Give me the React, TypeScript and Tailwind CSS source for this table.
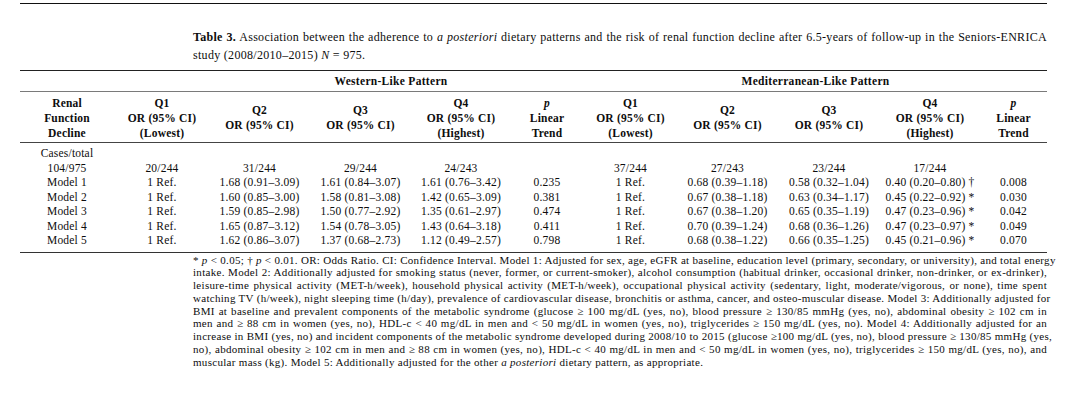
import React from "react";

const COLS =
  "grid grid-cols-[94px_96px_99px_103px_98px_74px_93px_101px_102px_100px_67px]";

const counts = ["104/975", "20/244", "31/244", "29/244", "24/243", "", "37/244", "27/243", "23/244", "17/244", ""];

const rows: string[][] = [
  ["Model 1", "1 Ref.", "1.68 (0.91–3.09)", "1.61 (0.84–3.07)", "1.61 (0.76–3.42)", "0.235", "1 Ref.", "0.68 (0.39–1.18)", "0.58 (0.32–1.04)", "0.40 (0.20–0.80) †", "0.008"],
  ["Model 2", "1 Ref.", "1.60 (0.85–3.00)", "1.58 (0.81–3.08)", "1.42 (0.65–3.09)", "0.381", "1 Ref.", "0.67 (0.38–1.18)", "0.63 (0.34–1.17)", "0.45 (0.22–0.92) *", "0.030"],
  ["Model 3", "1 Ref.", "1.59 (0.85–2.98)", "1.50 (0.77–2.92)", "1.35 (0.61–2.97)", "0.474", "1 Ref.", "0.67 (0.38–1.20)", "0.65 (0.35–1.19)", "0.47 (0.23–0.96) *", "0.042"],
  ["Model 4", "1 Ref.", "1.65 (0.87–3.12)", "1.54 (0.78–3.05)", "1.43 (0.64–3.18)", "0.411", "1 Ref.", "0.70 (0.39–1.24)", "0.68 (0.36–1.26)", "0.47 (0.23–0.97) *", "0.049"],
  ["Model 5", "1 Ref.", "1.62 (0.86–3.07)", "1.37 (0.68–2.73)", "1.12 (0.49–2.57)", "0.798", "1 Ref.", "0.68 (0.38–1.22)", "0.66 (0.35–1.25)", "0.45 (0.21–0.96) *", "0.070"],
];

const headers: React.ReactNode[][] = [
  [<>Renal</>, <>Function</>, <>Decline</>],
  [<>Q1</>, <>OR (95% CI)</>, <>(Lowest)</>],
  [<>Q2</>, <>OR (95% CI)</>],
  [<>Q3</>, <>OR (95% CI)</>],
  [<>Q4</>, <>OR (95% CI)</>, <>(Highest)</>],
  [<i>p</i>, <>Linear</>, <>Trend</>],
  [<>Q1</>, <>OR (95% CI)</>, <>(Lowest)</>],
  [<>Q2</>, <>OR (95% CI)</>],
  [<>Q3</>, <>OR (95% CI)</>],
  [<>Q4</>, <>OR (95% CI)</>, <>(Highest)</>],
  [<i>p</i>, <>Linear</>, <>Trend</>],
];

const J = "text-justify [text-align-last:justify] whitespace-nowrap";

export default function App() {
  return (
    <div className="w-[1078px] h-[404px] bg-white overflow-hidden font-['Liberation_Serif',serif] text-[#0d0d0d]">
      <div className="ml-[20px] w-[1027px] pt-[3px]">
        <div className="border-t border-[#111]" />
        {/* caption */}
        <div className="ml-[173px] w-[854px] pt-[24px] pb-[6px] text-[12px] leading-[18px] tracking-[0.3px]">
          <div className={J}>
            <b>Table 3.</b> Association between the adherence to <i>a posteriori</i> dietary patterns and the risk of renal function decline after 6.5-years of follow-up in the Seniors-ENRICA
          </div>
          <div>
            study (2008/2010–2015) <i>N</i> = 975.
          </div>
        </div>
        <div className="border-t border-[#222]" />
        {/* group header */}
        <div className={`${COLS} h-[20px] text-[11.5px] font-bold leading-[20px] tracking-[0.3px]`}>
          <div />
          <div className="col-span-5 pl-[84px] text-center">Western-Like Pattern</div>
          <div className="col-span-5 text-center">Mediterranean-Like Pattern</div>
        </div>
        <div className="border-t-[1.5px] border-[#7a7a7a]" />
        {/* column headers */}
        <div className={`${COLS} h-[50px] pt-[2px] text-[11.5px] font-bold leading-[15px] tracking-[0.2px]`}>
          {headers.map((h, i) => (
            <div key={i} className="flex flex-col items-center justify-center text-center whitespace-nowrap">
              {h.map((l, j) => (
                <div key={j}>{l}</div>
              ))}
            </div>
          ))}
        </div>
        <div className="border-t border-[#444]" />
        {/* body */}
        <div className="pt-[3px] pb-[4px] text-[11.5px] leading-[14.5px] tracking-[0.2px]">
          <div className={COLS}>
            <div className="text-center">Cases/total</div>
          </div>
          <div className={COLS}>
            {counts.map((c, i) => (
              <div key={i} className="text-center">
                {c}
              </div>
            ))}
          </div>
          {rows.map((r, ri) => (
            <div key={ri} className={COLS}>
              {r.map((c, i) => (
                <div key={i} className="text-center whitespace-nowrap">
                  {c}
                </div>
              ))}
            </div>
          ))}
        </div>
        <div className="border-t border-[#333]" />
        {/* footnote */}
        <div className="ml-[173px] w-[854px] pt-[1px] text-[11px] leading-[12.75px] tracking-[0.3px]">
          <div className={J}>
            * <i>p</i> &lt; 0.05; † <i>p</i> &lt; 0.01. OR: Odds Ratio. CI: Confidence Interval. Model 1: Adjusted for sex, age, eGFR at baseline, education level (primary, secondary, or university), and total energy
          </div>
          <div className={J}>
            intake. Model 2: Additionally adjusted for smoking status (never, former, or current-smoker), alcohol consumption (habitual drinker, occasional drinker, non-drinker, or ex-drinker),
          </div>
          <div className={J}>
            leisure-time physical activity (MET-h/week), household physical activity (MET-h/week), occupational physical activity (sedentary, light, moderate/vigorous, or none), time spent
          </div>
          <div className={J}>
            watching TV (h/week), night sleeping time (h/day), prevalence of cardiovascular disease, bronchitis or asthma, cancer, and osteo-muscular disease. Model 3: Additionally adjusted for
          </div>
          <div className={J}>
            BMI at baseline and prevalent components of the metabolic syndrome (glucose ≥ 100 mg/dL (yes, no), blood pressure ≥ 130/85 mmHg (yes, no), abdominal obesity ≥ 102 cm in
          </div>
          <div className={J}>
            men and ≥ 88 cm in women (yes, no), HDL-c &lt; 40 mg/dL in men and &lt; 50 mg/dL in women (yes, no), triglycerides ≥ 150 mg/dL (yes, no). Model 4: Additionally adjusted for an
          </div>
          <div className={J}>
            increase in BMI (yes, no) and incident components of the metabolic syndrome developed during 2008/10 to 2015 (glucose ≥100 mg/dL (yes, no), blood pressure ≥ 130/85 mmHg (yes,
          </div>
          <div className={J}>
            no), abdominal obesity ≥ 102 cm in men and ≥ 88 cm in women (yes, no), HDL-c &lt; 40 mg/dL in men and &lt; 50 mg/dL in women (yes, no), triglycerides ≥ 150 mg/dL (yes, no), and
          </div>
          <div>
            muscular mass (kg). Model 5: Additionally adjusted for the other <i>a posteriori</i> dietary pattern, as appropriate.
          </div>
        </div>
      </div>
    </div>
  );
}
